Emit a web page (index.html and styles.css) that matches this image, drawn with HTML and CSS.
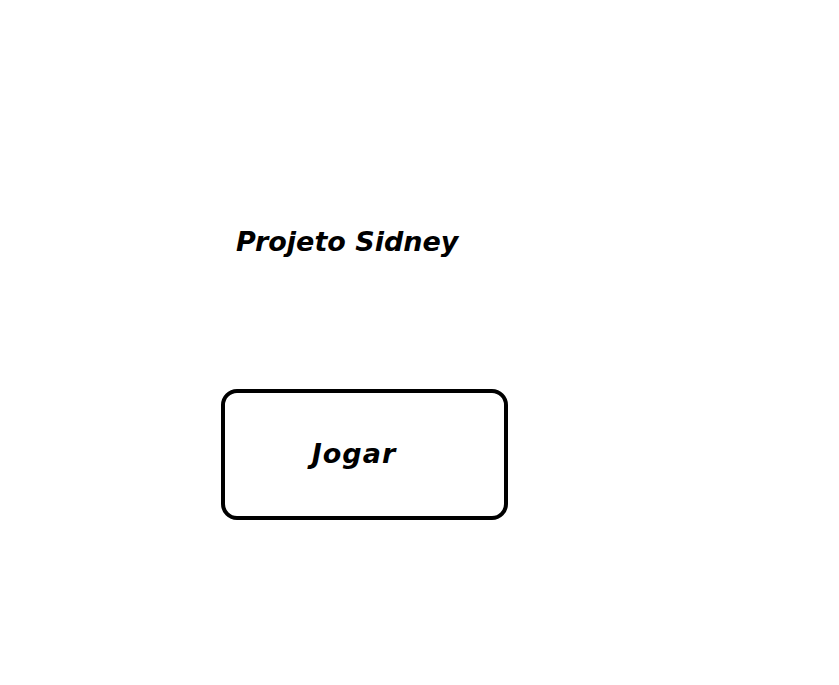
FILE: index.html
```html
<!DOCTYPE html>
<html lang="pt">
<head>
    <meta charset="UTF-8">
    <meta name="viewport" content="width=device-width, initial-scale=1.0">
    <title>Projeto Sidney</title>
    <link rel="stylesheet" href="styles.css">
</head>
<body>
    <div class="screen">
        <h1 class="title">Projeto Sidney</h1>
        <button class="play-btn">Jogar</button>
    </div>
</body>
</html>
```

FILE: styles.css
```css
* {
    box-sizing: border-box;
    margin: 0;
    padding: 0;
}

body {
    font-family: "DejaVu Sans", "Open Sans", sans-serif;
    background: #fff;
    color: #000;
    min-height: 100vh;
}

.screen {
    display: flex;
    flex-direction: column;
    align-items: flex-start;
    padding: 222px 0 0 221px;
}

.title {
    font-size: 27px;
    font-weight: 700;
    font-style: italic;
    margin-left: 15px;
    line-height: 40px;
}

.play-btn {
    margin-top: 127px;
    width: 287px;
    height: 131px;
    border: 4px solid #000;
    border-radius: 16px;
    background: #fff;
    font-family: inherit;
    font-size: 27px;
    font-weight: 700;
    font-style: italic;
    letter-spacing: 1px;
    color: #000;
    padding: 0 21px 2px 0;
    cursor: pointer;
}
```
